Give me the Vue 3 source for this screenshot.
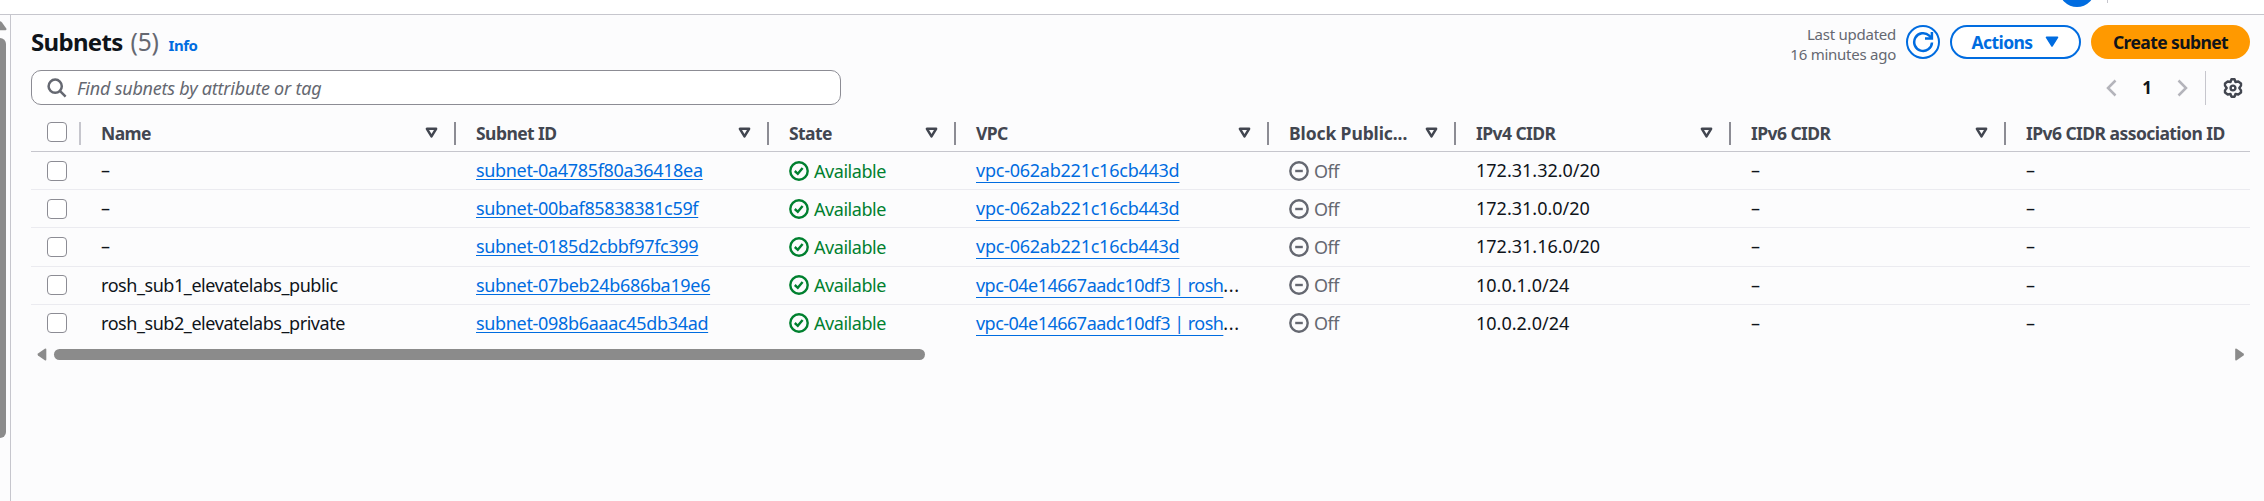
<script setup>
const columns = [
  { label: 'Name', key: 'name' },
  { label: 'Subnet ID', key: 'id' },
  { label: 'State', key: 'state' },
  { label: 'VPC', key: 'vpc' },
  { label: 'Block Public...', key: 'block', tight: true },
  { label: 'IPv4 CIDR', key: 'ipv4' },
  { label: 'IPv6 CIDR', key: 'ipv6' },
  { label: 'IPv6 CIDR association ID', key: 'assoc', last: true },
]

const rows = [
  { name: '–', id: 'subnet-0a4785f80a36418ea', vpc: 'vpc-062ab221c16cb443d', ipv4: '172.31.32.0/20' },
  { name: '–', id: 'subnet-00baf85838381c59f', vpc: 'vpc-062ab221c16cb443d', ipv4: '172.31.0.0/20' },
  { name: '–', id: 'subnet-0185d2cbbf97fc399', vpc: 'vpc-062ab221c16cb443d', ipv4: '172.31.16.0/20' },
  { name: 'rosh_sub1_elevatelabs_public', id: 'subnet-07beb24b686ba19e6', vpc: 'vpc-04e14667aadc10df3 | rosh', more: true, ipv4: '10.0.1.0/24' },
  { name: 'rosh_sub2_elevatelabs_private', id: 'subnet-098b6aaac45db34ad', vpc: 'vpc-04e14667aadc10df3 | rosh', more: true, ipv4: '10.0.2.0/24' },
]
</script>

<template>
  <div class="page">
    <header class="topbar">
      <span class="avatar"></span>
      <span class="topbar-rule"></span>
    </header>
    <div class="body">
      <aside class="rail">
        <svg class="rail-arrow" width="7" height="10" viewBox="0 0 7 10"><path d="M0 0.3Q1 0.3 2 1.6L6.3 7.6Q7 9.3 5.6 9.3H0Z" fill="#8b8b8b" /></svg>
        <div class="rail-thumb"></div>
      </aside>
      <main class="panel">
        <div class="head">
          <h1>Subnets</h1>
          <span class="count">(5)</span>
          <a class="info">Info</a>
          <div class="actions">
            <div class="updated">Last updated<br />16 minutes ago</div>
            <button class="refresh" aria-label="Refresh">
              <svg width="22" height="22" viewBox="0 0 22 22" fill="none" stroke="#006ce0" stroke-width="2.5">
                <path d="M20 11.5A8.9 8.9 0 1 1 17.2 4.6L19.7 7" />
                <path d="M19.9 1V7.6H13" />
              </svg>
            </button>
            <button class="menu">
              <span>Actions</span>
              <svg width="14" height="12" viewBox="0 0 14 12"><path d="M1.5 1.4H12.5L7 10Z" fill="#006ce0" stroke="#006ce0" stroke-width="1.6" stroke-linejoin="round" /></svg>
            </button>
            <button class="create"><span>Create subnet</span></button>
          </div>
        </div>

        <div class="tools">
          <label class="search">
            <svg width="20" height="20" viewBox="0 0 20 20" fill="none" stroke="#656871" stroke-width="2.5"><circle cx="8.2" cy="8.2" r="6.6" /><path d="M12.9 12.9L18.6 18.6" /></svg>
            <span>Find subnets by attribute or tag</span>
          </label>
          <div class="pager">
            <svg width="11" height="18" viewBox="0 0 11 18" fill="none" stroke="#b4b4bb" stroke-width="2.5"><path d="M9.5 1.5L2 9L9.5 16.5" /></svg>
            <b>1</b>
            <svg width="11" height="18" viewBox="0 0 11 18" fill="none" stroke="#b4b4bb" stroke-width="2.5"><path d="M1.5 1.5L9 9L1.5 16.5" /></svg>
            <span class="pager-rule"></span>
            <svg class="gear" width="20" height="20" viewBox="0 0 20 20" fill="none" stroke="#424650" stroke-width="2.4" stroke-linejoin="round">
              <path d="M8.4 1.3H11.6L12.5 4L15.3 3.5L18 5.4L18 7.6L16.3 10L18 12.4L18 14.6L15.3 16.5L12.5 16L11.6 18.7H8.4L7.5 16L4.7 16.5L2 14.6L2 12.4L3.7 10L2 7.6L2 5.4L4.7 3.5L7.5 4Z" />
              <circle cx="10" cy="10" r="2.4" />
            </svg>
          </div>
        </div>

        <div class="table">
          <div class="row header">
            <div class="cell check"><i class="box"></i></div>
            <div v-for="c in columns" :key="c.key" class="cell" :class="{ last: c.last, tight: c.tight }">
              <span>{{ c.label }}</span>
              <svg v-if="!c.last" width="13" height="12" viewBox="0 0 13 12"><path d="M1.9 1.8H11.1L6.5 9.4Z" fill="none" stroke="#424650" stroke-width="2.5" stroke-linejoin="round" /></svg>
            </div>
          </div>
          <div v-for="r in rows" :key="r.id" class="row">
            <div class="cell check"><i class="box"></i></div>
            <div class="cell name">{{ r.name }}</div>
            <div class="cell"><a class="link id">{{ r.id }}</a></div>
            <div class="cell status ok">
              <svg width="20" height="20" viewBox="0 0 20 20" fill="none" stroke="#00802f" stroke-width="2.4"><circle cx="10" cy="10" r="8.7" /><path d="M5.8 10L8.8 12.8L13.6 7" /></svg>
              <span>Available</span>
            </div>
            <div class="cell"><a class="link vpc" :class="{ long: r.more }">{{ r.vpc }}</a><span v-if="r.more" class="more">...</span></div>
            <div class="cell status off">
              <svg width="20" height="20" viewBox="0 0 20 20" fill="none" stroke="#656871" stroke-width="2.4"><circle cx="10" cy="10" r="8.7" /><path d="M6.2 10H13.8" /></svg>
              <span>Off</span>
            </div>
            <div class="cell">{{ r.ipv4 }}</div>
            <div class="cell">–</div>
            <div class="cell">–</div>
          </div>
        </div>

        <div class="hscroll">
          <svg width="10" height="13" viewBox="0 0 10 13"><path d="M9.3 1.6V11.4Q9.3 13 7.8 12.2L1 7.4Q0 6.5 1 5.6L7.8 0.8Q9.3 0 9.3 1.6Z" fill="#8b8b8b" /></svg>
          <div class="hthumb"></div>
          <svg class="right" width="10" height="13" viewBox="0 0 10 13"><path d="M0.2 1.6V11.4Q0.2 13 1.7 12.2L8.5 7.4Q9.5 6.5 8.5 5.6L1.7 0.8Q0.2 0 0.2 1.6Z" fill="#8b8b8b" /></svg>
        </div>
      </main>
    </div>
  </div>
</template>

<style>
body { margin: 0; background: #fcfcfd; }
</style>

<style scoped>
* { box-sizing: border-box; }
.page {
  height: 501px;
  overflow: hidden;
  display: flex;
  flex-direction: column;
  background: #fcfcfd;
  color: #0f141a;
  font: 18px/24px "Noto Sans", "Open Sans", sans-serif;
  white-space: nowrap;
}
.topbar {
  flex: none;
  height: 15px;
  display: flex;
  align-items: flex-end;
  justify-content: flex-end;
  overflow: hidden;
  background: #fff;
  border-bottom: 1px solid #c6c6cd;
}
.avatar { width: 36px; height: 36px; margin: 0 12px 7px 0; border-radius: 50%; background: #006ce0; }
.topbar-rule { width: 1px; height: 14px; margin: 0 156px 11px 0; background: #c6c6cd; }
.body { flex: 1; display: flex; min-height: 0; }
.rail { flex: none; width: 11px; padding-top: 6px; border-right: 1px solid #c6c6cd; }
.rail-arrow { display: block; }
.rail-thumb { width: 6px; height: 400px; margin-top: 7px; border-radius: 0 6px 6px 0; background: #8b8b8b; }
.panel { flex: 1; min-width: 0; padding: 9px 14px 0 20px; }

.head { display: flex; height: 36px; align-items: flex-start; }
h1 { margin: 1px 0 0; font-size: 24px; line-height: 34px; font-weight: 700; letter-spacing: -0.7px; }
.count { margin: 1px 0 0 8px; font-size: 24.5px; line-height: 34px; color: #656871; letter-spacing: -0.2px; }
.info { margin: 9px 0 0 10px; font-size: 15px; line-height: 24px; font-weight: 700; color: #006ce0; letter-spacing: -0.5px; }
.actions { margin-left: auto; display: flex; align-items: flex-start; }
.updated { margin: 0 10px 0 0; font-size: 15px; line-height: 20px; text-align: right; color: #656871; letter-spacing: -0.25px; }
button { margin: 1px 0 0; padding: 0; display: flex; align-items: center; justify-content: center; height: 34px; border-radius: 17px; font: 700 17.5px/24px "Noto Sans", "Open Sans", sans-serif; letter-spacing: -0.6px; white-space: nowrap; }
.refresh, .menu { border: 2px solid #006ce0; background: #fff; color: #006ce0; }
.refresh { width: 34px; }
.refresh svg { flex: none; }
.menu { width: 131px; margin-left: 10px; gap: 13px; }
.create { width: 159px; margin-left: 10px; border: 0; background: #ff9900; color: #0f141a; }

.tools { display: flex; height: 53px; padding-top: 10px; align-items: flex-start; }
.search { display: flex; align-items: center; width: 810px; height: 35px; padding-left: 15px; gap: 10px; border: 1px solid #8c8c94; border-radius: 10px; background: #fff; color: #656871; font-style: italic; }
.search span { letter-spacing: -0.22px; }
.pager { margin-left: auto; display: flex; align-items: center; height: 35px; padding-right: 7px; }
.pager b { width: 60px; text-align: center; font-size: 17px; }
.pager-rule { width: 1px; height: 34px; margin: 0 17px; background: #c6c6cd; }

.table { height: 231px; overflow: hidden; }
.row { display: grid; grid-template-columns: 50px 375px 313px 187px 313px 187px 275px 275px 1fr; height: 38.2px; border-bottom: 1px solid #ebebf0; }
.row:last-child { border-bottom-color: transparent; }
.cell { display: flex; align-items: center; min-width: 0; padding: 0 0 1px 20px; }
.check, .status { padding-bottom: 0; }
.check { padding-left: 16px; }
.box { flex: none; width: 20px; height: 20px; border: 1px solid #8c8c94; border-radius: 4px; background: #fff; }
.header { height: 39px; border-bottom-color: #c6c6cd; color: #424650; font-weight: 700; font-size: 17.5px; letter-spacing: -0.56px; }
.header .cell { position: relative; padding-top: 1px; padding-bottom: 0; padding-right: 18.5px; justify-content: space-between; }
.header .check { padding-top: 0; padding-right: 0; justify-content: flex-start; }
.header .cell::after { content: ""; position: absolute; right: 0; top: 9px; width: 2px; height: 23px; background: #8c8c94; }
.header .check::after { background: #c6c6cd; }
.header .last::after { content: none; }
.header .tight { letter-spacing: -0.1px; }
.name { letter-spacing: -0.44px; }
.link { color: #006ce0; text-decoration: underline; text-decoration-thickness: 1px; text-underline-offset: 2px; letter-spacing: -0.33px; }
.vpc { text-underline-offset: 5px; letter-spacing: -0.24px; }
.long { letter-spacing: -0.52px; }
.more { letter-spacing: 0.6px; }
.status { gap: 5px; letter-spacing: -0.45px; }
.ok { color: #00802f; }
.off { color: #656871; }

.hscroll { display: flex; align-items: center; height: 13px; margin-top: 4px; padding: 0 5px 0 6px; }
.hthumb { width: 871px; height: 11px; margin-left: 7px; border-radius: 6px; background: #8b8b8b; }
.right { margin-left: auto; }
</style>
